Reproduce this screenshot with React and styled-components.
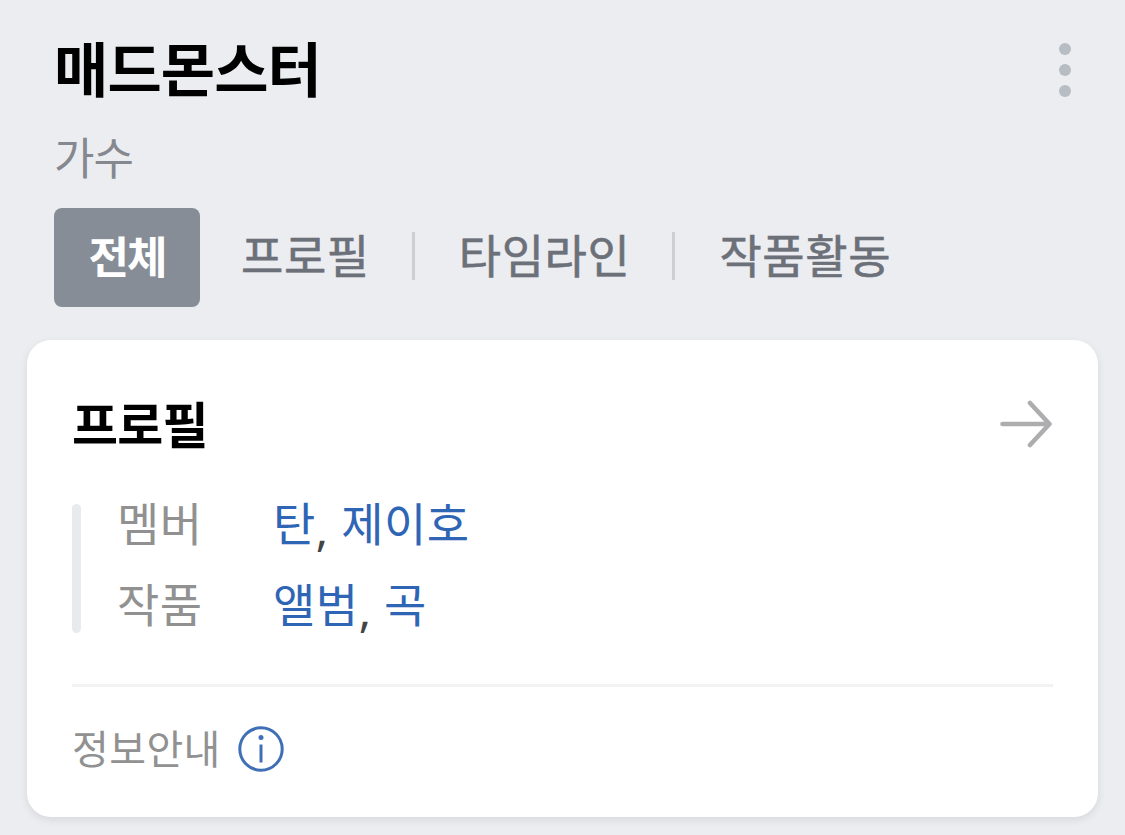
import React from 'react';
import styled, { createGlobalStyle } from 'styled-components';

const tabs = ['전체', '프로필', '타임라인', '작품활동'];

const details = [
  { label: '멤버', values: ['탄', '제이호'] },
  { label: '작품', values: ['앨범', '곡'] },
];

const App = () => (
  <>
    <GlobalStyle />
    <Page>
      <Header>
        <div>
          <Title>매드몬스터</Title>
          <Category>가수</Category>
        </div>
        <MoreButton aria-label="더보기">
          <Dot />
          <Dot />
          <Dot />
        </MoreButton>
      </Header>

      <Tabs>
        {tabs.map((tab, index) => (
          <React.Fragment key={tab}>
            {index > 1 && <TabDivider />}
            <Tab $active={index === 0}>{tab}</Tab>
          </React.Fragment>
        ))}
      </Tabs>

      <Card>
        <CardHeader>
          <CardTitle>프로필</CardTitle>
          <svg width="54" height="48" viewBox="0 0 54 48" fill="none" stroke="#adadaf" strokeWidth="4.6" strokeLinecap="round" strokeLinejoin="round">
            <path d="M3.5 24H50.5M31 3L50.5 24L31 45" />
          </svg>
        </CardHeader>

        <Details>
          <DetailBar />
          <div>
            {details.map(({ label, values }) => (
              <DetailRow key={label}>
                <Label>{label}</Label>
                <Value>
                  {values.map((value, index) => (
                    <React.Fragment key={value}>
                      {index > 0 && <Comma>, </Comma>}
                      <Link>{value}</Link>
                    </React.Fragment>
                  ))}
                </Value>
              </DetailRow>
            ))}
          </div>
        </Details>

        <CardFooter>
          <FooterText>정보안내</FooterText>
          <svg width="46" height="46" viewBox="0 0 46 46" fill="none" stroke="#3f70b5" strokeWidth="3">
            <circle cx="23" cy="23" r="21.2" />
            <path d="M23 18.5V36.5" />
            <circle cx="23" cy="11.5" r="2.5" fill="#3f70b5" stroke="none" />
          </svg>
        </CardFooter>
      </Card>
    </Page>
  </>
);

const GlobalStyle = createGlobalStyle`
  * {
    box-sizing: border-box;
  }

  body {
    margin: 0;
    background-color: #ecedf1;
    font-family: 'Noto Sans CJK KR', sans-serif;
  }
`;

const Page = styled.main`
  height: 835px;
  padding: 32px 27px 0;
  overflow: hidden;
`;

const Header = styled.header`
  display: flex;
  justify-content: space-between;
  height: 176px;
  padding: 0 27px;
`;

const Title = styled.h1`
  margin: 0;
  font-size: 59px;
  line-height: 70px;
  font-weight: 700;
  letter-spacing: -0.9px;
`;

const Category = styled.div`
  margin-top: 19px;
  font-size: 44px;
  line-height: 70px;
  letter-spacing: -1px;
  color: #85888f;
`;

const MoreButton = styled.button`
  display: flex;
  flex-direction: column;
  align-items: center;
  gap: 9px;
  width: 12px;
  height: 54px;
  margin-top: 11px;
  padding: 0;
  border: 0;
  background: none;
`;

const Dot = styled.span`
  flex: none;
  width: 12px;
  height: 12px;
  border-radius: 50%;
  background-color: #b8bcc3;
`;

const Tabs = styled.nav`
  display: flex;
  height: 99px;
  padding-left: 27px;
`;

const Tab = styled.div`
  width: ${props => props.$active ? '146px' : 'auto'};
  height: 99px;
  margin-right: ${props => props.$active ? '41px' : '0'};
  border-radius: 8px;
  font-size: ${props => props.$active ? '44px' : '46px'};
  line-height: ${props => props.$active ? '95px' : '90px'};
  text-align: center;
  letter-spacing: ${props => props.$active ? '-2px' : '0.6px'};
  font-weight: ${props => props.$active ? 700 : 400};
  color: ${props => props.$active ? '#ffffff' : '#6c7079'};
  background-color: ${props => props.$active ? '#878d97' : 'transparent'};
  -webkit-text-stroke: ${props => props.$active ? '0' : '0.6px #6c7079'};
`;

const TabDivider = styled.span`
  width: 3px;
  height: 48px;
  margin: 24px 44px 0 42px;
  background-color: #cccfd3;
`;

const Card = styled.section`
  height: 477px;
  margin-top: 33px;
  padding: 48px 45px 0;
  border-radius: 24px;
  background-color: #ffffff;
  box-shadow: 0 3px 9px rgba(0, 0, 0, 0.09);
`;

const CardHeader = styled.div`
  display: flex;
  align-items: center;
  justify-content: space-between;
  height: 72px;
`;

const CardTitle = styled.h2`
  margin: -4px 0 0;
  font-size: 50px;
  line-height: 72px;
  letter-spacing: -0.8px;
`;

const Details = styled.div`
  display: flex;
  height: 129px;
  margin-top: 44px;
`;

const DetailBar = styled.div`
  width: 9px;
  margin-right: 36px;
  border-radius: 5px;
  background-color: #e9eaeb;
`;

const DetailRow = styled.div`
  display: flex;
  height: 81px;
  margin-top: -7px;
  margin-bottom: 7px;
  font-size: 46px;
  line-height: 48px;
  letter-spacing: 0.5px;
`;

const Label = styled.span`
  width: 156px;
  color: #919191;
`;

const Value = styled.span`
  color: #444444;
`;

const Comma = styled.span`
  font-family: 'Noto Sans', sans-serif;
  line-height: 1px;
  vertical-align: -5px;
  white-space: pre;
`;

const Link = styled.a`
  color: #2f65b5;
`;

const CardFooter = styled.footer`
  display: flex;
  align-items: center;
  gap: 17px;
  height: 130px;
  margin-top: 51px;
  padding-bottom: 3px;
  border-top: 3px solid #f2f2f2;
  color: #919191;
`;

const FooterText = styled.span`
  margin-top: -4px;
  font-size: 40px;
  letter-spacing: 0.4px;
`;

export default App;
